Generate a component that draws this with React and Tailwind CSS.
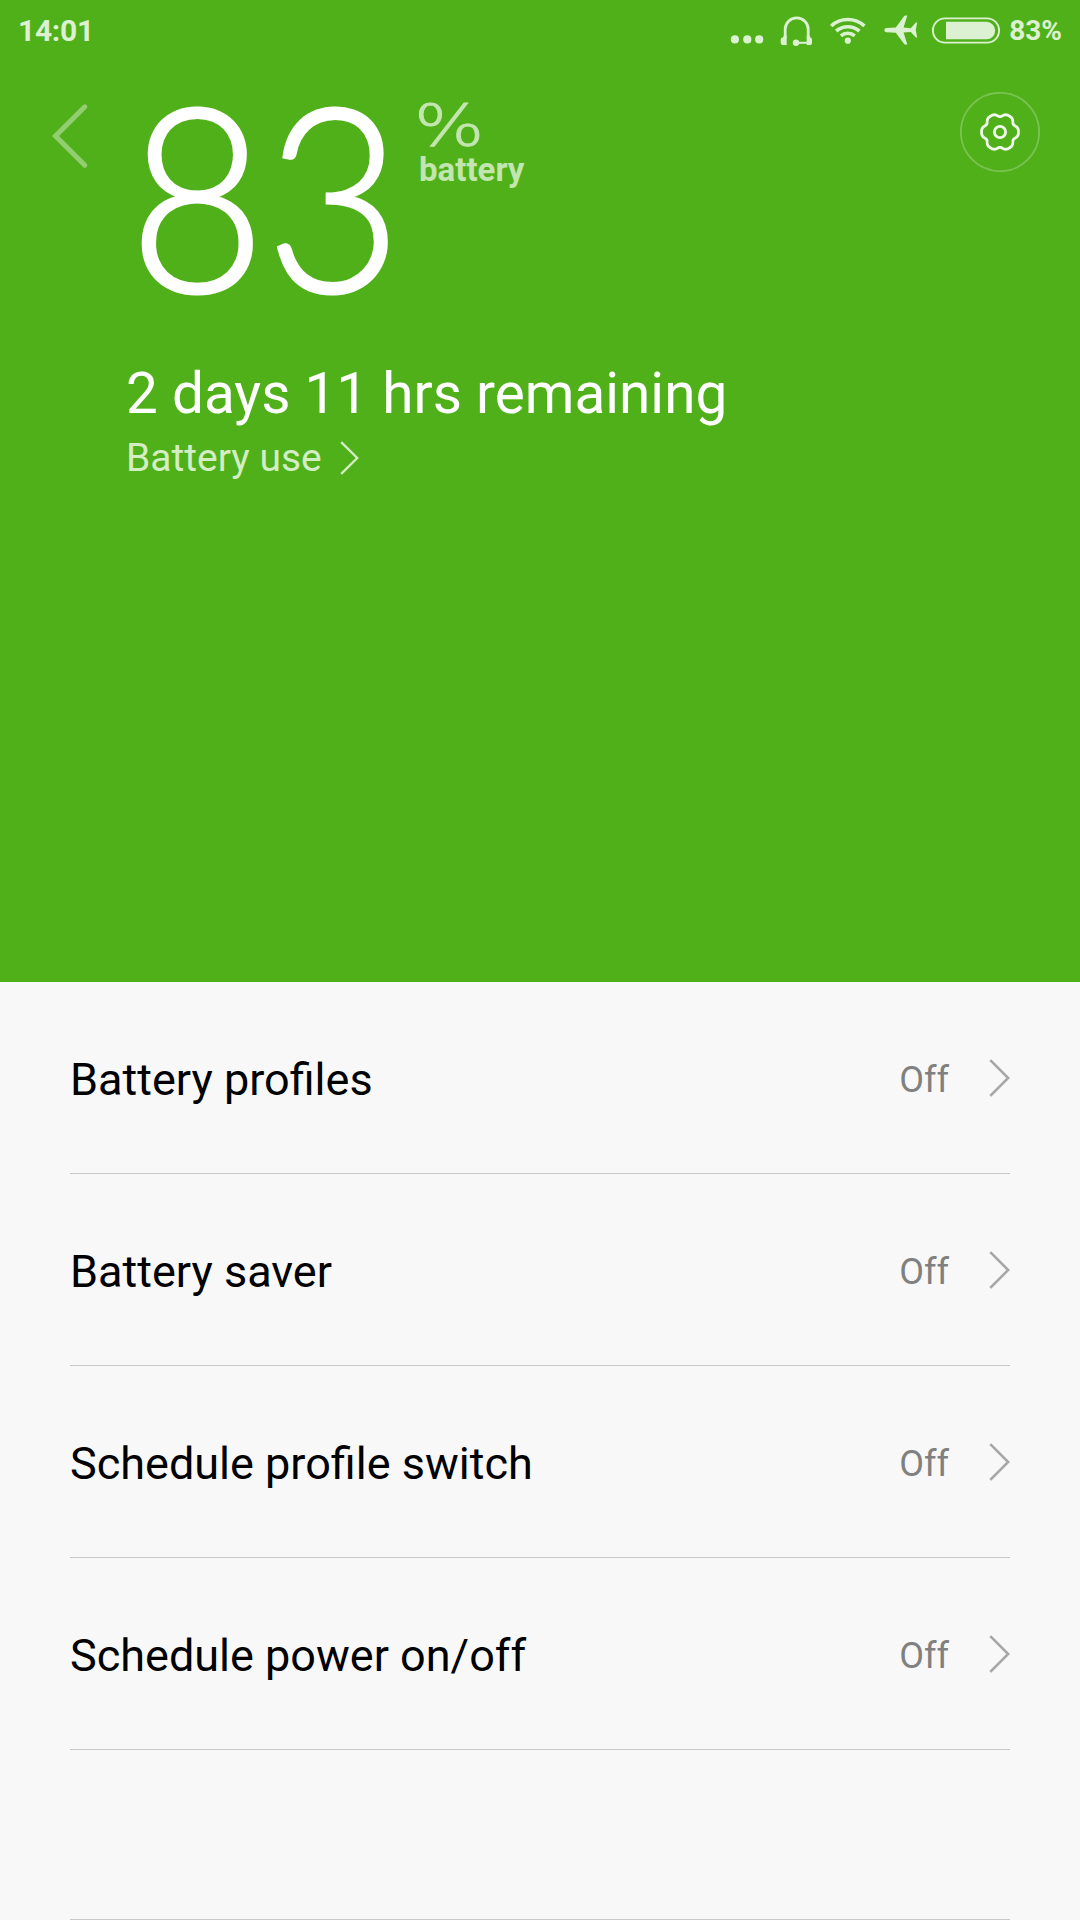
// src/screens/BatteryScreen.jsx
import React from 'react';

const settings = [
  { label: 'Battery profiles', value: 'Off' },
  { label: 'Battery saver', value: 'Off' },
  { label: 'Schedule profile switch', value: 'Off' },
  { label: 'Schedule power on/off', value: 'Off' },
];

// closed outline of a soft six-lobed cog, centred on 40,40
const gearPath = () => {
  const pts = [];
  for (let i = 0; i < 120; i++) {
    const a = (i / 120) * Math.PI * 2;
    const r = 17.3 + 1.55 * Math.cos(6 * a) - 0.4 * Math.cos(12 * a);
    pts.push(`${(40 + r * Math.cos(a)).toFixed(2)} ${(40 + r * Math.sin(a)).toFixed(2)}`);
  }
  return `M${pts.join('L')}Z`;
};

function StatusBar() {
  return (
    <div className="h-[61px] pl-[18px] pr-[18px] flex items-center text-[#dcf1d1] font-bold">
      <span className="text-[30px] leading-none tracking-[-0.3px]">14:01</span>

      <svg className="ml-auto w-[34px] h-[60px]" viewBox="730 0 34 60" fill="currentColor">
        <circle cx="734.9" cy="38.4" r="4.1" />
        <circle cx="747.3" cy="38.4" r="4.1" />
        <circle cx="759.2" cy="38.4" r="4.1" />
      </svg>

      <svg className="ml-[16px] w-[34px] h-[60px]" viewBox="780 0 34 60" fill="currentColor">
        <path d="M785.2 37V28.1a11.5 11.2 0 0 1 23 0V37" fill="none" stroke="currentColor" strokeWidth="2.8" />
        <path d="M784 34.6h2.7v9.5h-3.2a2.8 2.8 0 0 1-2.8-2.8v-2.5a2.2 2.2 0 0 1 2.2-2.2z" />
        <path d="M809.4 34.6h-2.7v9.5h3.2a2.2 2.2 0 0 0 2.1-2.8v-2.5a2.2 2.2 0 0 0-1.5-2.2z" />
        <path d="M796 41.8h12" stroke="currentColor" strokeWidth="2" />
        <circle cx="796" cy="41.8" r="3.2" />
      </svg>

      <svg className="ml-[15px] w-[38px] h-[60px]" viewBox="829 0.4 38 60" fill="none" stroke="currentColor" strokeWidth="3.7">
        <path d="M831.2 25.4a24.5 24.5 0 0 1 33.2 0" />
        <path d="M836.2 30.6a17.3 17.3 0 0 1 23.2 0" />
        <path d="M840.9 35.2a10.6 10.6 0 0 1 13.8 0" />
        <circle cx="847.8" cy="40.1" r="3.1" fill="currentColor" stroke="none" />
      </svg>

      <svg className="ml-[16px] w-[36px] h-[60px]" viewBox="883 0.5 36 60" fill="currentColor">
        <path d="M886.5 27.4L895.8 27L904.2 15.6Q904.6 15 905.4 15H907.3L903.6 27.1L910.8 27.7L915.4 22.6Q916 21.8 917.2 21.8L915.8 29.5L917.2 37.2Q916 37.2 915.4 36.4L910.8 31.5L903.6 32.1L907.3 44.1H905.4Q904.6 44.1 904.2 43.5L895.8 32.2L886.5 31.8A2.2 2.2 0 0 1 886.5 27.4z" />
      </svg>

      <svg className="ml-[12px] w-[70px] h-[60px]" viewBox="931 0.5 70 60">
        <rect x="932.9" y="17.9" width="66.2" height="24.2" rx="12.1" fill="none" stroke="currentColor" strokeWidth="1.9" />
        <path d="M946 21.3h41.3a8.8 8.8 0 0 1 0 17.5H946z" fill="currentColor" />
      </svg>

      <span className="ml-[8px] text-[28px] leading-none">83%</span>
    </div>
  );
}

function Chevron({ className }) {
  return (
    <svg className={className} viewBox="0 0 22 38" fill="none" stroke="currentColor" strokeWidth="2.6">
      <path d="M2.3 1.2L20.2 19L2.3 36.8" />
    </svg>
  );
}

export default function App() {
  return (
    <div className="w-[1080px] h-[1920px] bg-[#f8f8f8] font-['Roboto',sans-serif] overflow-hidden">
      <header className="h-[982px] bg-[#50b019] text-white">
        <StatusBar />

        <div className="h-[303px] pt-[31px] pl-[51px] pr-[40px] flex items-start">
          <svg className="mt-[9px] w-[40px] h-[70px]" viewBox="51 101 40 70" fill="none" stroke="#fff" strokeOpacity="0.38" strokeWidth="5" strokeLinecap="round">
            <path d="M84.8 106.8L55.5 136L84.8 165.2" />
          </svg>

          <div className="mt-[6px] ml-[38px] w-[279px] h-[190px] font-['Lato',sans-serif] font-light text-[256px] leading-[190px] origin-left scale-x-[0.92] [-webkit-text-stroke:3px_#fff]">83</div>

          <div className="ml-[11px] mt-[11px] flex flex-col text-[#c3e5af]">
            <span className="-ml-[5px] h-[49px] w-[56px] font-['DejaVu_Sans',sans-serif] font-extralight text-[57px] leading-[46px] origin-left scale-x-[1.3] [-webkit-text-stroke:0.8px_#c3e5af]">%</span>
            <span className="text-[33px] font-bold leading-[36px]">battery</span>
          </div>

          <svg className="ml-auto w-[80px] h-[80px]" viewBox="0 0 80 80" fill="none" stroke="#fff">
            <circle cx="40" cy="40" r="39.2" strokeOpacity="0.24" strokeWidth="1.8" />
            <path d={gearPath()} strokeWidth="2.8" strokeOpacity="0.92" />
            <circle cx="40" cy="40" r="5.6" strokeWidth="2.8" strokeOpacity="0.92" />
          </svg>
        </div>

        <div className="pl-[126px]">
          <h1 className="text-[56.7px] leading-[60px]">2 days 11 hrs remaining</h1>
          <div className="mt-[14px] flex items-center text-[#d3edc5]">
            <span className="text-[39px] leading-[40px]">Battery use</span>
            <Chevron className="ml-[17px] w-[20px] h-[34px]" />
          </div>
        </div>
      </header>

      <main className="px-[70px]">
        {settings.map((s) => (
          <div key={s.label} className="h-[192px] flex items-center border-b border-[#c9c9c9]">
            <span className="pt-1 text-[45px] leading-[54px] text-black">{s.label}</span>
            <span className="pt-1 ml-auto text-[36px] leading-[44px] text-[#808080]">{s.value}</span>
            <Chevron className="ml-[39px] w-[22px] h-[38px] text-[#a6a6a6]" />
          </div>
        ))}
        <div className="h-[170px] border-b border-[#c9c9c9]" />
      </main>
    </div>
  );
}
